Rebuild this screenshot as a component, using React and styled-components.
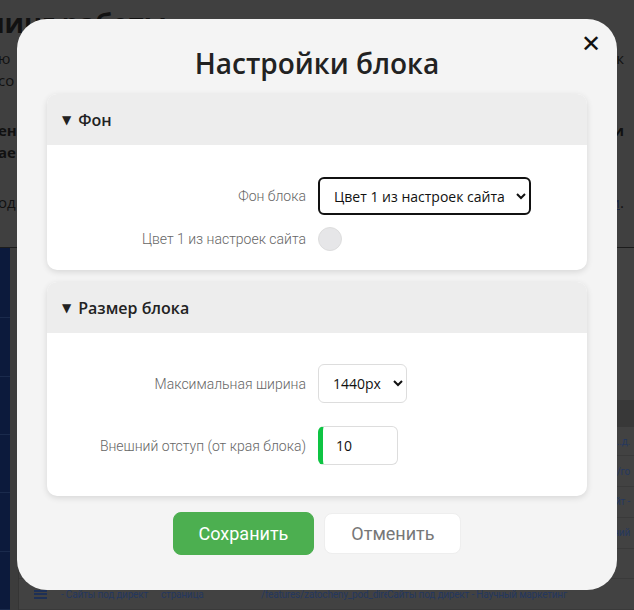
import React from "react"
import styled, { createGlobalStyle } from "styled-components"

const GlobalStyle = createGlobalStyle`
  html, body {
    margin: 0;
    padding: 0;
    background: #404040;
  }
  * {
    box-sizing: border-box;
  }
`

const Page = styled.div`
  position: relative;
  width: 634px;
  height: 610px;
  overflow: hidden;
  background: #404040;
  font-family: "Open Sans", sans-serif;
`

const Intro = styled.div`
  height: 248px;
  padding: 6px 0 0;
  border-bottom: 1px solid #1c1c1c;
  color: #111;
`

const IntroTitle = styled.div`
  margin-left: -62px;
  font-size: 27px;
  font-weight: 700;
  line-height: 34px;
`

const IntroLine = styled.div`
  display: flex;
  justify-content: space-between;
  margin: ${(p) => p.$top || 0}px 10px 0 -2px;
  font-size: 15px;
  line-height: 22px;
  font-weight: ${(p) => (p.$bold ? 700 : 400)};

  u {
    color: #1b2440;
  }
`

const Workspace = styled.div`
  display: flex;
  height: 362px;
`

const Sidebar = styled.div`
  width: 10px;
  background: #0c1a3c;
  display: flex;
  flex-direction: column;
  padding-top: 12px;
`

const SideItem = styled.div`
  height: 61px;
  border-bottom: 1px solid #1a2a4c;
`

const Gutter = styled.div`
  width: 9px;
  background: #3c3c3c;
  border-right: 1px solid #353535;
`

const Main = styled.div`
  flex: 1;
  display: flex;
  flex-direction: column;
  padding-top: 152px;
  background: #424242;
`

const TableHead = styled.div`
  height: 32px;
  background: #383838;
`

const TableRow = styled.div`
  display: grid;
  grid-template-columns: 27px 100px 100px 126px 1fr;
  align-items: center;
  height: ${(p) => p.$h || 34}px;
  border-bottom: 1px solid #3a3a3a;
  font-family: Roboto, sans-serif;
  font-size: 10px;
  letter-spacing: -0.2px;
  color: #25385f;
  white-space: nowrap;
  padding-left: 15px;
`

const Cell = styled.span`
  overflow: hidden;
  min-width: 0;
  text-align: ${(p) => (p.$right ? "right" : "left")};
  padding-right: ${(p) => (p.$right ? 4 : 6)}px;
`

const Burger = styled.span`
  width: 13px;
  height: 9px;
  border-top: 2px solid #1e3056;
  border-bottom: 2px solid #1e3056;
  position: relative;

  &::after {
    content: "";
    position: absolute;
    left: 0;
    right: 0;
    top: 1.5px;
    height: 2px;
    background: #1e3056;
  }
`

const Modal = styled.div`
  position: absolute;
  left: 17px;
  top: 19px;
  width: 600px;
  height: 571px;
  background: #f4f4f4;
  border-radius: 30px;
  padding: 26px 30px 0;
  display: flex;
  flex-direction: column;
`

const Close = styled.button`
  position: absolute;
  top: 11px;
  right: 16px;
  width: 20px;
  height: 28px;
  padding: 0;
  border: 0;
  background: none;
  font-family: "DejaVu Sans", sans-serif;
  font-size: 24px;
  font-weight: 700;
  line-height: 28px;
  color: #111;
  cursor: pointer;
`

const Title = styled.h2`
  margin: 0 0 13px;
  text-align: center;
  font-family: "Open Sans", sans-serif;
  font-size: 28px;
  font-weight: 600;
  line-height: 36px;
  color: #222;
`

const Card = styled.section`
  background: #fff;
  border-radius: 10px;
  box-shadow: 0 2px 6px rgba(0, 0, 0, 0.12);
  margin-bottom: 12px;
  overflow: hidden;
`

const CardHead = styled.div`
  height: 51px;
  display: flex;
  align-items: center;
  gap: 7px;
  padding-left: 15px;
  background: #ededed;
  font-size: 16px;
  font-weight: 600;
  color: #222;
`

const Caret = styled.span`
  font-family: "DejaVu Sans", sans-serif;
  font-size: 12px;
  color: #222;
`

const CardBody = styled.div`
  display: flex;
  flex-direction: column;
  gap: ${(p) => p.$gap}px;
  padding: ${(p) => p.$pad};
`

const Row = styled.div`
  display: grid;
  grid-template-columns: 259px 1fr;
  column-gap: 12px;
  align-items: center;
`

const Label = styled.label`
  text-align: right;
  font-family: Roboto, sans-serif;
  font-weight: 300;
  font-size: 14px;
  color: #666;
`

const Select = styled.select`
  width: ${(p) => p.$w}px;
  height: ${(p) => (p.$strong ? 38 : 39)}px;
  padding: 0 6px 0 10px;
  border: ${(p) => (p.$strong ? "2px solid #111" : "1px solid #ddd")};
  border-radius: 6px;
  background: #fff;
  font-family: "Open Sans", sans-serif;
  font-size: 14px;
  color: #111;
`

const Swatch = styled.span`
  width: 24px;
  height: 24px;
  border-radius: 50%;
  background: #e6e6e8;
  border: 1px solid #ddd;
`

const NumberInput = styled.input`
  width: 80px;
  height: 39px;
  padding: 0 0 0 13px;
  border: 1px solid #ddd;
  border-left: 5px solid #0ec443;
  border-radius: 6px;
  font-family: "Open Sans", sans-serif;
  font-size: 14px;
  color: #111;
  outline: none;
`

const Actions = styled.div`
  display: flex;
  justify-content: center;
  align-items: center;
  gap: 10px;
  margin-top: 4px;
`

const Button = styled.button`
  height: ${(p) => (p.$primary ? 43 : 41)}px;
  padding: 0 ${(p) => (p.$primary ? 25 : 26)}px;
  border-radius: 8px;
  border: 1px solid ${(p) => (p.$primary ? "#4caf50" : "#eee")};
  background: ${(p) => (p.$primary ? "#4caf50" : "#fff")};
  color: ${(p) => (p.$primary ? "#fff" : "#777")};
  font-family: Roboto, sans-serif;
  font-size: 18px;
  cursor: pointer;
`

const rows = [
  { h: 34, tail: "...д." },
  { h: 36, tail: "/страницы/публ/го" },
  { h: 36, tail: "- Продающий сайт -" },
  { h: 36, tail: "Инженер знаний" },
  { h: 36, tail: "" },
]

export default function App() {
  return (
    <Page>
      <GlobalStyle />
      <Intro>
        <IntroTitle>Тренинг работы</IntroTitle>
        <IntroLine $top={7}>
          <span>ю</span>
          <span>ичк</span>
        </IntroLine>
        <IntroLine>
          <span>со</span>
        </IntroLine>
        <IntroLine $top={28} $bold>
          <span>ен</span>
          <span>ти</span>
        </IntroLine>
        <IntroLine $bold>
          <span>ае</span>
        </IntroLine>
        <IntroLine $top={28}>
          <span>од</span>
          <span>
            <u>и</u>.
          </span>
        </IntroLine>
      </Intro>
      <Workspace>
        <Sidebar>
          {[0, 1, 2, 3, 4, 5].map((i) => (
            <SideItem key={i} />
          ))}
        </Sidebar>
        <Gutter />
        <Main>
          <TableHead />
          {rows.map((r, i) => (
            <TableRow key={i} $h={r.h}>
              <Cell />
              <Cell />
              <Cell />
              <Cell />
              <Cell $right>{r.tail}</Cell>
            </TableRow>
          ))}
          <TableRow $h={36}>
            <Burger />
            <Cell>- Сайты под директ</Cell>
            <Cell>страница</Cell>
            <Cell>/features/zatocheny_pod_direkt</Cell>
            <Cell>Сайты под директ - Научный маркетинг</Cell>
          </TableRow>
        </Main>
      </Workspace>

      <Modal>
        <Close aria-label="Закрыть">✕</Close>
        <Title>Настройки блока</Title>

        <Card>
          <CardHead>
            <Caret>▼</Caret>
            Фон
          </CardHead>
          <CardBody $gap={12} $pad="32px 0 19px">
            <Row>
              <Label>Фон блока</Label>
              <Select $w={213} $strong defaultValue="c1">
                <option value="c1">Цвет 1 из настроек сайта</option>
                <option value="c2">Цвет 2 из настроек сайта</option>
              </Select>
            </Row>
            <Row>
              <Label>Цвет 1 из настроек сайта</Label>
              <Swatch />
            </Row>
          </CardBody>
        </Card>

        <Card>
          <CardHead>
            <Caret>▼</Caret>
            Размер блока
          </CardHead>
          <CardBody $gap={23} $pad="31px 0 31px">
            <Row>
              <Label>Максимальная ширина</Label>
              <Select $w={89} defaultValue="1440">
                <option value="1440">1440px</option>
                <option value="1200">1200px</option>
              </Select>
            </Row>
            <Row>
              <Label>Внешний отступ (от края блока)</Label>
              <NumberInput type="text" defaultValue="10" />
            </Row>
          </CardBody>
        </Card>

        <Actions>
          <Button $primary>Сохранить</Button>
          <Button>Отменить</Button>
        </Actions>
      </Modal>
    </Page>
  )
}
